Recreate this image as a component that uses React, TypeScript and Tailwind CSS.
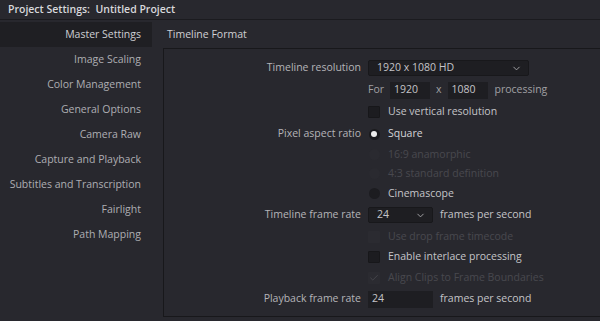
import { ChevronDown, Check } from 'lucide-react';

const sections = [
  'Image Scaling',
  'Color Management',
  'General Options',
  'Camera Raw',
  'Capture and Playback',
  'Subtitles and Transcription',
  'Fairlight',
  'Path Mapping',
];

function Row({ label, h, children }: { label?: string; h: string; children: React.ReactNode }) {
  return (
    <div className={`flex items-center ${h}`}>
      <div className="w-[197px] shrink-0 text-right text-[#b4b4b8]">{label}</div>
      <div className="ml-[7px] flex items-center">{children}</div>
    </div>
  );
}

function Box({ checked, disabled }: { checked?: boolean; disabled?: boolean }) {
  return (
    <span
      className={`flex h-[12px] w-[12px] items-center justify-center rounded-[1px] ${
        disabled ? 'bg-[#2b2b31]' : 'bg-[#1c1c20] border border-[#17171a]'
      }`}
    >
      {checked && <Check size={10} strokeWidth={2} className="text-[#4a4a50]" />}
    </span>
  );
}

function Radio({ on, disabled }: { on?: boolean; disabled?: boolean }) {
  return (
    <span className="flex w-[12px] justify-center">
      <span
        className={`flex h-[11px] w-[11px] items-center justify-center rounded-full ${
          on ? 'bg-[#1a1a1d]' : disabled ? 'bg-[#2a2a30]' : 'bg-[#1c1c20]'
        }`}
      >
        {on && <span className="h-[6px] w-[6px] rounded-full bg-[#ececec]" />}
      </span>
    </span>
  );
}

export default function App() {
  return (
    <div
      className="flex h-[321px] w-[600px] flex-col overflow-hidden bg-[#28282e] text-[10.5px] text-[#c4c4c8]"
      style={{ fontFamily: '"Open Sans", "Noto Sans", sans-serif' }}
    >
      <div className="flex h-[20px] shrink-0 items-center border-b border-[#1b1b1f] pl-[8px] text-[10.5px] font-semibold text-[#d8d8dc]">
        Project Settings:&nbsp; Untitled Project
      </div>

      <div className="flex flex-1">
        <div className="w-[152px] shrink-0 pt-[2px]">
          <div className="flex h-[25px] items-center justify-end bg-[#1f1f23] pr-[11px] text-[#cfcfd3]">
            Master Settings
          </div>
          {sections.map((s) => (
            <div key={s} className="flex h-[25px] items-center justify-end pr-[11px] text-[#aeaeb3]">
              {s}
            </div>
          ))}
        </div>

        <div className="flex flex-1 flex-col pt-[2px]">
          <div className="flex h-[25px] items-center pl-[15px] font-medium text-[#d0d0d4]">
            Timeline Format
          </div>
          <div className="ml-[11px] mt-[1px] h-[269px] border-t border-l border-b border-[#18181b] pt-[8px]">
            <Row label="Timeline resolution" h="h-[22px]">
              <div className="flex h-[16px] w-[161px] items-center justify-between rounded-[2px] border border-[#18181b] bg-[#1e1e22] pl-[8px] pr-[6px]">
                <span>1920 x 1080 HD</span>
                <ChevronDown size={11} className="text-[#a8a8ac]" />
              </div>
            </Row>
            <Row h="h-[22px]">
              <span className="text-[#a0a0a4]">For</span>
              <div className="ml-[6px] flex h-[17px] w-[40px] items-center bg-[#1e1e22] pl-[4px]">1920</div>
              <span className="mx-[6px] text-[#a0a0a4]">x</span>
              <div className="flex h-[17px] w-[40px] items-center bg-[#1e1e22] pl-[4px]">1080</div>
              <span className="ml-[7px] text-[#a0a0a4]">processing</span>
            </Row>
            <Row h="h-[22px]">
              <Box />
              <span className="ml-[8px]">Use vertical resolution</span>
            </Row>
            <Row label="Pixel aspect ratio" h="h-[22px]">
              <Radio on />
              <span className="ml-[8px] text-[#d4d4d8]">Square</span>
            </Row>
            <Row h="h-[19px]">
              <Radio disabled />
              <span className="ml-[8px] text-[#48484e]">16:9 anamorphic</span>
            </Row>
            <Row h="h-[19px]">
              <Radio disabled />
              <span className="ml-[8px] text-[#48484e]">4:3 standard definition</span>
            </Row>
            <Row h="h-[21px]">
              <Radio />
              <span className="ml-[8px]">Cinemascope</span>
            </Row>
            <Row label="Timeline frame rate" h="h-[22px]">
              <div className="flex h-[16px] w-[65px] items-center justify-between rounded-[2px] border border-[#18181b] bg-[#1e1e22] pl-[8px] pr-[6px]">
                <span>24</span>
                <ChevronDown size={11} className="text-[#a8a8ac]" />
              </div>
              <span className="ml-[7px]">frames per second</span>
            </Row>
            <Row h="h-[21px]">
              <Box disabled />
              <span className="ml-[8px] text-[#48484e]">Use drop frame timecode</span>
            </Row>
            <Row h="h-[20px]">
              <Box />
              <span className="ml-[8px]">Enable interlace processing</span>
            </Row>
            <Row h="h-[21px]">
              <Box checked disabled />
              <span className="ml-[8px] text-[#48484e]">Align Clips to Frame Boundaries</span>
            </Row>
            <Row label="Playback frame rate" h="h-[22px]">
              <div className="flex h-[17px] w-[65px] items-center bg-[#1e1e22] pl-[4px]">24</div>
              <span className="ml-[7px]">frames per second</span>
            </Row>
          </div>
        </div>
      </div>
    </div>
  );
}
